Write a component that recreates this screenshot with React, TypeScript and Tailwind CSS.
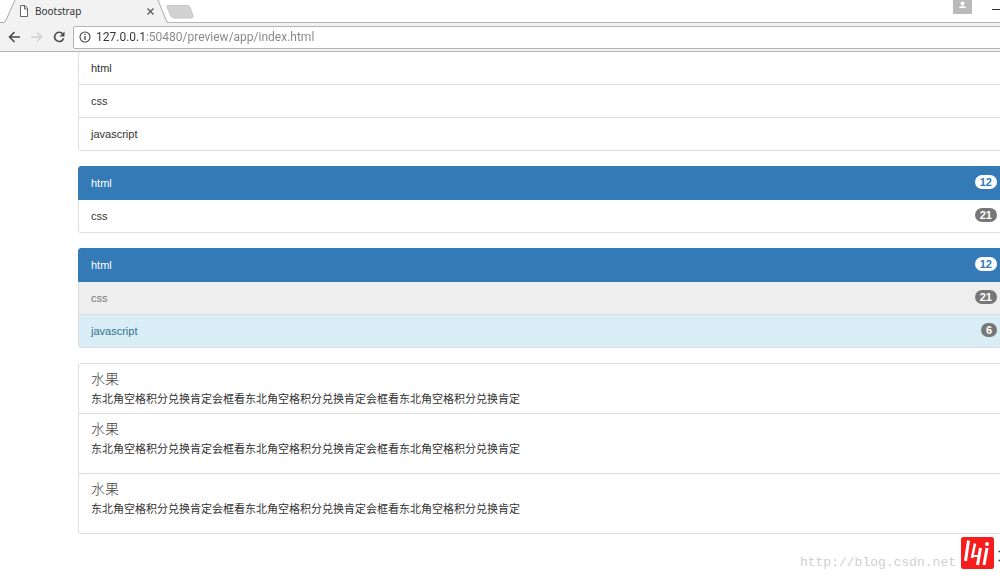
import React, { useState } from "react";
import clsx from "clsx";

type Item = {
  label: string;
  badge?: number;
  state?: "active" | "disabled" | "info";
};

const PLAIN_ITEMS: Item[] = [
  { label: "html" },
  { label: "css" },
  { label: "javascript" },
];

const BADGE_ITEMS: Item[] = [
  { label: "html", badge: 12, state: "active" },
  { label: "css", badge: 21 },
];

const LINK_ITEMS: Item[] = [
  { label: "html", badge: 12, state: "active" },
  { label: "css", badge: 21, state: "disabled" },
  { label: "javascript", badge: 6, state: "info" },
];

const ARTICLE_TEXT =
  "东北角空格积分兑换肯定会框看东北角空格积分兑换肯定会框看东北角空格积分兑换肯定";

const ARTICLES = [
  { title: "水果", text: ARTICLE_TEXT, tall: false },
  { title: "水果", text: ARTICLE_TEXT, tall: true },
  { title: "水果", text: ARTICLE_TEXT, tall: true },
];

const itemClass = (state?: Item["state"]) =>
  clsx(
    "-mt-px flex items-start justify-between border px-3 py-2 leading-4 first:mt-0 first:rounded-t-[3px] last:rounded-b-[3px]",
    !state && "border-[#ddd] bg-white text-[#333]",
    state === "active" && "relative border-[#337ab7] bg-[#337ab7] text-white",
    state === "disabled" && "border-[#ddd] bg-[#eee] text-[#777]",
    state === "info" && "border-[#ddd] bg-[#d9edf7] text-[#31708f]"
  );

const ItemContent = ({ item }: { item: Item }) => (
  <>
    <span>{item.label}</span>
    {item.badge !== undefined && (
      <span
        className={clsx(
          "rounded-full px-[5px] text-[11px] leading-[14px] font-bold",
          item.state === "active"
            ? "bg-white text-[#337ab7]"
            : "bg-[#777] text-white"
        )}
      >
        {item.badge}
      </span>
    )}
  </>
);

const ListGroup = ({ items }: { items: Item[] }) => (
  <ul>
    {items.map((item) => (
      <li key={item.label} className={itemClass(item.state)}>
        <ItemContent item={item} />
      </li>
    ))}
  </ul>
);

const LinkGroup = ({ items }: { items: Item[] }) => (
  <div>
    {items.map((item) => (
      <a key={item.label} href="#" className={itemClass(item.state)}>
        <ItemContent item={item} />
      </a>
    ))}
  </div>
);

const TabStrip = () => (
  <div className="flex h-[23px] items-start border-b border-[#b4b4b4] bg-white">
    <div className="relative h-[23px] w-[168px]">
      <svg
        className="absolute inset-0"
        width="168"
        height="23"
        viewBox="0 0 168 23"
        aria-hidden="true"
      >
        <path d="M4 23 L15 0 H158 L167 23 Z" fill="#f2f2f2" />
        <path
          d="M0 22.500 H4 Q5.500 22 6 20 L15 0 M158 0 L166 20 Q166.500 22 168 22.500"
          fill="none"
          stroke="#a8a8a8"
        />
      </svg>
      <div className="relative flex h-[22px] items-center pr-[12px] pl-[19px]">
        <svg width="10" height="12" viewBox="0 0 10 12" aria-hidden="true">
          <path
            d="M1.500 .5 H6 L8.500 3.500 V11.500 H1.500 Z M5.500 .5 V4 H8.500"
            fill="#fff"
            stroke="#666"
          />
        </svg>
        <span className="ml-[6px] flex-1 text-[10px] text-[#333]">
          Bootstrap
        </span>
        <button type="button" aria-label="Close tab" className="p-px">
          <svg width="9" height="9" viewBox="0 0 9 9" aria-hidden="true">
            <path d="M1.500 1.500 L7.500 7.500 M7.500 1.500 L1.500 7.500" stroke="#555" strokeWidth="1.200" />
          </svg>
        </button>
      </div>
    </div>
    <button type="button" aria-label="New tab" className="-ml-[2px] pt-[5px]">
      <svg width="28" height="14" viewBox="0 0 28 14" aria-hidden="true">
        <path
          d="M1.500 .5 H21 Q23 .5 24 2.500 L27 11 Q27.500 13 25.500 13 H8 Q6 13 5 11 L1 2 Q.5 .5 1.500 .5 Z"
          fill="#d2d2d2"
          stroke="#c4c4c4"
        />
      </svg>
    </button>
    <div className="ml-auto flex items-start">
      <button type="button" aria-label="Profile" className="bg-[#bababa]">
        <svg width="19" height="14" viewBox="0 0 19 14" aria-hidden="true">
          <circle cx="9.500" cy="3.500" r="2" fill="#fff" />
          <path d="M6 8 Q6 6 9.500 6 Q13 6 13 8 Z" fill="#fff" />
        </svg>
      </button>
      <button type="button" aria-label="Minimize" className="ml-5">
        <svg width="8" height="14" viewBox="0 0 8 14" aria-hidden="true">
          <path d="M0 9.500 H8" stroke="#333" />
        </svg>
      </button>
    </div>
  </div>
);

const Toolbar = () => {
  const [url, setUrl] = useState("127.0.0.1:50480/preview/app/index.html");

  return (
    <div className="flex h-[29px] items-center border-b border-[#b4b4b4] bg-[#f2f2f2] pl-2">
      <button type="button" aria-label="Back">
        <svg width="13" height="12" viewBox="0 0 13 12" aria-hidden="true">
          <path
            d="M12 6 H1.500 M6.500 1 L1.500 6 L6.500 11"
            fill="none"
            stroke="#4a4a4a"
            strokeWidth="1.600"
          />
        </svg>
      </button>
      <button type="button" aria-label="Forward" className="ml-[10px]">
        <svg width="12" height="12" viewBox="0 0 12 12" aria-hidden="true">
          <path
            d="M0 6 H10.500 M6 1.500 L10.500 6 L6 10.500"
            fill="none"
            stroke="#d0d0d0"
            strokeWidth="1.400"
          />
        </svg>
      </button>
      <button type="button" aria-label="Reload" className="ml-[10px]">
        <svg width="12" height="12" viewBox="0 0 12 12" aria-hidden="true">
          <path
            d="M9.800 3 A4.600 4.600 0 1 0 10.600 7.300"
            fill="none"
            stroke="#4a4a4a"
            strokeWidth="1.600"
          />
          <path d="M11.500 .5 V5.500 H6.500 Z" fill="#4a4a4a" />
        </svg>
      </button>
      <div className="-mr-1 ml-2 flex h-[23px] flex-1 items-center rounded-[2px] border border-[#b4b4b4] bg-white pl-[5px]">
        <svg width="12" height="12" viewBox="0 0 12 12" aria-hidden="true">
          <circle cx="6" cy="6" r="5" fill="none" stroke="#444" strokeWidth="1.100" />
          <path d="M6 5 V9 M6 2.800 V4" stroke="#444" strokeWidth="1.300" />
        </svg>
        {/* host part is darker than the path */}
        <input
          type="text"
          aria-label="Address"
          value={url}
          onChange={(e) => setUrl(e.target.value)}
          className="ml-[5px] flex-1 bg-[linear-gradient(to_right,#333_50px,#858585_50px)] bg-clip-text font-[Roboto,sans-serif] text-[12px] text-transparent outline-none"
        />
      </div>
    </div>
  );
};

const Watermark = () => (
  <div className="absolute right-0 bottom-[6px] flex items-end">
    <span className="font-['Liberation_Mono',monospace] text-[13px] leading-5 text-[#d0d0d0]">
      http://blog.csdn.net
    </span>
    <svg
      className="mb-[3px] ml-1"
      width="40"
      height="34"
      viewBox="0 0 40 34"
      role="img"
      aria-label="logo"
    >
      <rect x="1" y="1" width="33" height="32" rx="2.500" fill="#f81d1d" />
      <g fill="none" stroke="#fff" strokeWidth="3">
        <path d="M8.500 4.500 L5.500 25" />
        <path d="M15 7.500 L12 22" strokeWidth="2.500" />
        <path d="M12 20 H19" strokeWidth="2" />
        <path d="M20.500 12 L17.500 29" />
        <path d="M27 12 L24 29" />
      </g>
      <circle cx="27" cy="8" r="2" fill="#fff" />
      <path d="M38.500 15.500 H40 M38.500 24.500 H40" stroke="#444" strokeWidth="1.500" />
    </svg>
  </div>
);

const App = () => {
  return (
    <div className="relative min-h-screen overflow-hidden bg-white font-['Liberation_Sans','Noto_Sans_CJK_SC',sans-serif] text-[11px]">
      <header className="relative z-10 font-['Noto_Sans',sans-serif]">
        <TabStrip />
        <Toolbar />
      </header>

      <main className="-mt-px -mr-[10px] ml-[78px] flex flex-col gap-[15px] pb-11">
        <ListGroup items={PLAIN_ITEMS} />
        <ListGroup items={BADGE_ITEMS} />
        <LinkGroup items={LINK_ITEMS} />

        <div>
          {ARTICLES.map((article, index) => (
            <a
              key={index}
              href="#"
              className={clsx(
                "-mt-px block border border-[#ddd] px-3 pt-[5px] first:mt-0 first:rounded-t-[3px] last:rounded-b-[3px]",
                article.tall ? "pb-[13px]" : "pb-[3px]"
              )}
            >
              <h4 className="text-[14px] leading-5 font-light text-[#444]">
                {article.title}
              </h4>
              <p className="leading-[21px] text-[#333]">{article.text}</p>
            </a>
          ))}
        </div>
      </main>

      <Watermark />
    </div>
  );
};

export default App;
